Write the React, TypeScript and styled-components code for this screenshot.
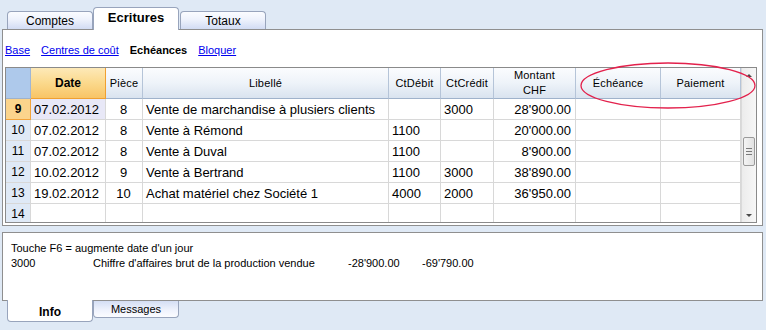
import React from 'react';
import styled, { createGlobalStyle, css } from 'styled-components';

const GlobalStyle = createGlobalStyle`
  body {
    margin: 0;
    background: #dfe9f5;
    font-family: "Liberation Sans", Arial, sans-serif;
  }
`;

const Screen = styled.div`
  position: relative;
  width: 766px;
  height: 330px;
  background: #dfe9f5;
  overflow: hidden;
`;

const TopTabs = styled.div`
  display: flex;
  align-items: flex-end;
  height: 22px;
  padding: 7px 0 0 7px;
`;

const TopTab = styled.div<{ $active?: boolean }>`
  box-sizing: border-box;
  width: 86px;
  height: 18px;
  border: 1px solid #98a4bc;
  border-bottom: none;
  border-radius: 4px 4px 0 0;
  background: linear-gradient(#fbfcff, #eef2fc 45%, #d2dcf4);
  display: flex;
  align-items: center;
  justify-content: center;
  font-size: 12px;
  color: #000;
  ${(p) =>
    p.$active &&
    css`
      position: relative;
      z-index: 1;
      height: 23px;
      margin-bottom: -1px;
      margin-right: 1px;
      background: #fff;
      font-weight: bold;
      font-size: 13px;
      padding-bottom: 3px;
    `}
`;

const Panel = styled.div`
  box-sizing: border-box;
  width: 761px;
  height: 197px;
  margin-left: 2px;
  border: 1px solid #8f8f8f;
  background: #fff;
`;

const LinkBar = styled.div`
  display: flex;
  align-items: center;
  gap: 11px;
  height: 37px;
  padding: 3px 0 0 2px;
  box-sizing: border-box;
  font-size: 11px;
`;

const NavLink = styled.a<{ $current?: boolean }>`
  color: ${(p) => (p.$current ? '#000' : '#0000ee')};
  text-decoration: ${(p) => (p.$current ? 'none' : 'underline')};
  font-weight: ${(p) => (p.$current ? 'bold' : 'normal')};
  cursor: pointer;
`;

const GridBox = styled.div`
  box-sizing: border-box;
  display: flex;
  width: 752px;
  height: 156px;
  margin-left: 2px;
  border: 1px solid #8a8a8a;
  overflow: hidden;
`;

const Table = styled.div`
  display: grid;
  grid-template-columns: 25px 75px 37px 246px 52px 53px 82px 85px 80px;
  grid-template-rows: 31px;
  grid-auto-rows: 21px;
  align-content: start;
`;

type Kind = 'num' | 'numSel' | 'sel' | undefined;

const Cell = styled.div<{ $align?: 'left' | 'center' | 'right'; $kind?: Kind }>`
  box-sizing: border-box;
  display: flex;
  align-items: center;
  justify-content: ${(p) =>
    p.$align === 'center' ? 'center' : p.$align === 'right' ? 'flex-end' : 'flex-start'};
  padding: 0 4px 0 3px;
  border-right: 1px solid #d8d8d8;
  border-bottom: 1px solid #d8d8d8;
  font-size: 13px;
  color: #000;
  white-space: nowrap;
  overflow: hidden;
  background: #fff;
  ${(p) =>
    p.$kind === 'num' &&
    css`
      background: #dfe9f6;
      font-size: 12px;
      padding: 0;
    `}
  ${(p) =>
    p.$kind === 'numSel' &&
    css`
      background: #fbd48c;
      border-right-color: #f2a33a;
      border-bottom-color: #f2a33a;
      font-size: 12px;
      font-weight: bold;
      padding: 0;
    `}
  ${(p) =>
    p.$kind === 'sel' &&
    css`
      background: #e8e8f7;
    `}
`;

const HeadCell = styled.div<{ $kind?: 'corner' | 'sorted' }>`
  box-sizing: border-box;
  display: flex;
  align-items: center;
  justify-content: center;
  text-align: center;
  line-height: 15px;
  font-size: 11px;
  letter-spacing: 0.2px;
  color: #000;
  border-right: 1px solid #b5c4d8;
  border-bottom: 1px solid #9fb2cb;
  background: linear-gradient(#fbfcfe, #eef3f9 50%, #d9e3ef);
  ${(p) =>
    p.$kind === 'corner' &&
    css`
      background: #aec9eb;
      border-right-color: #9fb6d6;
    `}
  ${(p) =>
    p.$kind === 'sorted' &&
    css`
      background: linear-gradient(#fde9b8, #fbd98c 50%, #f8c466);
      border-right-color: #f0a030;
      border-bottom-color: #f0a030;
      font-weight: bold;
      font-size: 12px;
      letter-spacing: 0;
    `}
`;

const ScrollBar = styled.div`
  box-sizing: border-box;
  width: 15px;
  display: flex;
  flex-direction: column;
  border-left: 1px solid #dadada;
  background: linear-gradient(90deg, #ececec, #f7f7f7);
`;

const ArrowButton = styled.div<{ $down?: boolean }>`
  height: 14px;
  display: flex;
  align-items: center;
  justify-content: center;
  &::after {
    content: '';
    border-left: 3px solid transparent;
    border-right: 3px solid transparent;
    ${(p) =>
      p.$down ? 'border-top: 3px solid #4a4a4a;' : 'border-bottom: 3px solid #4a4a4a;'}
  }
`;

const Track = styled.div`
  flex: 1;
  padding-top: 55px;
  padding-left: 1px;
`;

const Thumb = styled.div`
  box-sizing: border-box;
  width: 12px;
  height: 29px;
  border: 1px solid #9a9a9a;
  border-radius: 2px;
  background: linear-gradient(90deg, #f4f4f4, #e2e2e2);
  display: flex;
  flex-direction: column;
  align-items: center;
  justify-content: center;
  gap: 2px;
`;

const Grip = styled.div`
  width: 6px;
  height: 1px;
  background: #7a7a7a;
`;

const InfoPanel = styled.div`
  box-sizing: border-box;
  width: 761px;
  height: 69px;
  margin: 6px 0 0 2px;
  padding: 8px 0 0 8px;
  border: 1px solid #8f8f8f;
  background: #fff;
  font-size: 11px;
  line-height: 15px;
  color: #000;
`;

const InfoRow = styled.div`
  display: flex;
  white-space: nowrap;
`;

const InfoCol = styled.span<{ $w: number }>`
  width: ${(p) => p.$w}px;
`;

const BottomTabs = styled.div`
  display: flex;
  align-items: flex-start;
  padding-left: 7px;
`;

const BottomTab = styled.div<{ $active?: boolean }>`
  box-sizing: border-box;
  width: 86px;
  height: 17px;
  border: 1px solid #98a4bc;
  border-top: none;
  border-radius: 0 0 4px 4px;
  background: linear-gradient(#d4def4, #eef2fc 55%, #fbfcff);
  display: flex;
  align-items: center;
  justify-content: center;
  font-size: 11px;
  ${(p) =>
    p.$active &&
    css`
      position: relative;
      z-index: 1;
      height: 22px;
      margin-top: -1px;
      background: #fff;
      font-weight: bold;
      font-size: 12px;
      padding-top: 3px;
    `}
`;

const Highlight = styled.svg`
  position: absolute;
  left: 579px;
  top: 62px;
  pointer-events: none;
`;

type Entry = {
  num: number;
  date: string;
  piece: string;
  text: string;
  debit: string;
  credit: string;
  amount: string;
};

const entries: Entry[] = [
  { num: 9, date: '07.02.2012', piece: '8', text: 'Vente de marchandise à plusiers clients', debit: '', credit: '3000', amount: "28'900.00" },
  { num: 10, date: '07.02.2012', piece: '8', text: 'Vente à Rémond', debit: '1100', credit: '', amount: "20'000.00" },
  { num: 11, date: '07.02.2012', piece: '8', text: 'Vente à Duval', debit: '1100', credit: '', amount: "8'900.00" },
  { num: 12, date: '10.02.2012', piece: '9', text: 'Vente à Bertrand', debit: '1100', credit: '3000', amount: "38'890.00" },
  { num: 13, date: '19.02.2012', piece: '10', text: 'Achat matériel chez Société 1', debit: '4000', credit: '2000', amount: "36'950.00" },
  { num: 14, date: '', piece: '', text: '', debit: '', credit: '', amount: '' },
];

const App = () => {
  return (
    <Screen>
      <GlobalStyle />
      <TopTabs>
        <TopTab>Comptes</TopTab>
        <TopTab $active>Ecritures</TopTab>
        <TopTab>Totaux</TopTab>
      </TopTabs>

      <Panel>
        <LinkBar>
          <NavLink>Base</NavLink>
          <NavLink>Centres de coût</NavLink>
          <NavLink $current>Echéances</NavLink>
          <NavLink>Bloquer</NavLink>
        </LinkBar>

        <GridBox>
          <Table>
            <HeadCell $kind="corner" />
            <HeadCell $kind="sorted">Date</HeadCell>
            <HeadCell>Pièce</HeadCell>
            <HeadCell>Libellé</HeadCell>
            <HeadCell>CtDébit</HeadCell>
            <HeadCell>CtCrédit</HeadCell>
            <HeadCell>
              Montant
              <br />
              CHF
            </HeadCell>
            <HeadCell>Échéance</HeadCell>
            <HeadCell>Paiement</HeadCell>

            {entries.map((e, i) => (
              <React.Fragment key={e.num}>
                <Cell $align="center" $kind={i === 0 ? 'numSel' : 'num'}>{e.num}</Cell>
                <Cell $kind={i === 0 ? 'sel' : undefined}>{e.date}</Cell>
                <Cell $align="center">{e.piece}</Cell>
                <Cell>{e.text}</Cell>
                <Cell>{e.debit}</Cell>
                <Cell>{e.credit}</Cell>
                <Cell $align="right">{e.amount}</Cell>
                <Cell />
                <Cell />
              </React.Fragment>
            ))}
          </Table>

          <ScrollBar>
            <ArrowButton />
            <Track>
              <Thumb>
                <Grip />
                <Grip />
                <Grip />
              </Thumb>
            </Track>
            <ArrowButton $down />
          </ScrollBar>
        </GridBox>
      </Panel>

      <InfoPanel>
        <div>Touche F6 = augmente date d'un jour</div>
        <InfoRow>
          <InfoCol $w={82}>3000</InfoCol>
          <InfoCol $w={255}>Chiffre d'affaires brut de la production vendue</InfoCol>
          <InfoCol $w={74}>-28'900.00</InfoCol>
          <InfoCol $w={80}>-69'790.00</InfoCol>
        </InfoRow>
      </InfoPanel>

      <BottomTabs>
        <BottomTab $active>Info</BottomTab>
        <BottomTab>Messages</BottomTab>
      </BottomTabs>

      <Highlight width="178" height="48" viewBox="0 0 178 48">
        <ellipse cx="89" cy="23.5" rx="87" ry="22.5" fill="none" stroke="#e3214c" strokeWidth="1.3" />
      </Highlight>
    </Screen>
  );
};

export default App;
